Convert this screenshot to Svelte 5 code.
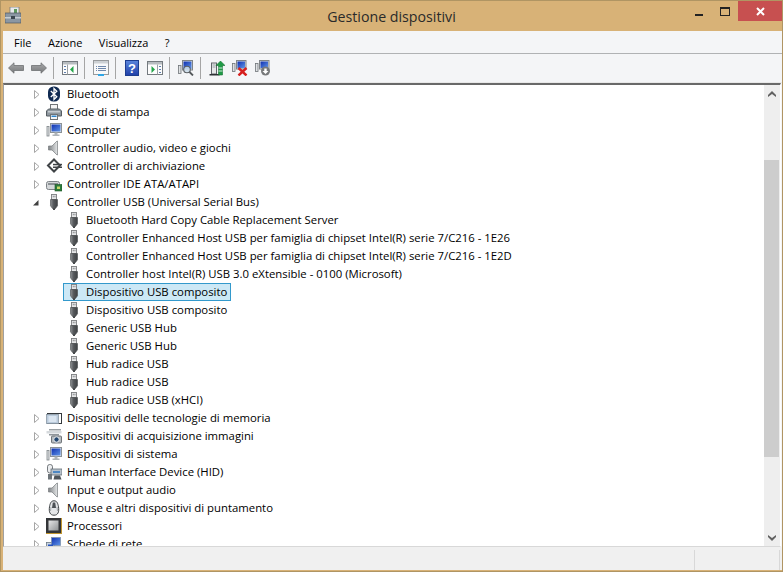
<script>
  const top1 = [
    ['bt','Bluetooth'],['printer','Code di stampa'],['computer','Computer'],['speaker','Controller audio, video e giochi'],
    ['storage','Controller di archiviazione'],['ide','Controller IDE ATA/ATAPI']
  ];
  const usb = ['Bluetooth Hard Copy Cable Replacement Server','Controller Enhanced Host USB per famiglia di chipset Intel(R) serie 7/C216 - 1E26','Controller Enhanced Host USB per famiglia di chipset Intel(R) serie 7/C216 - 1E2D','Controller host Intel(R) USB 3.0 eXtensible - 0100 (Microsoft)','Dispositivo USB composito','Dispositivo USB composito','Generic USB Hub','Generic USB Hub','Hub radice USB','Hub radice USB','Hub radice USB (xHCI)'];
  const top2 = [
    ['memory','Dispositivi delle tecnologie di memoria'],['camera','Dispositivi di acquisizione immagini'],['computer','Dispositivi di sistema'],['hid','Human Interface Device (HID)'],
    ['speaker','Input e output audio'],['mouse','Mouse e altri dispositivi di puntamento'],['cpu','Processori'],['net','Schede di rete']
  ];
  const tools = [['back','fwd'],['tree'],['props'],['help','pane'],['scan'],['update','remove','install']];
</script>

<svg class="defs" width="0" height="0" aria-hidden="true">
  <defs>
    <linearGradient id="arrowg" x1="0" y1="0" x2="0" y2="1"><stop offset="0" stop-color="#a8a9aa"/><stop offset="1" stop-color="#77797b"/></linearGradient>
    <linearGradient id="helpg" x1="0" y1="0" x2="0" y2="1"><stop offset="0" stop-color="#5b86dc"/><stop offset="1" stop-color="#1f3fa8"/></linearGradient>
    <linearGradient id="screeng" x1="0" y1="0" x2="1" y2="1"><stop offset="0" stop-color="#0f2fb0"/><stop offset="1" stop-color="#5f95e8"/></linearGradient>
    <linearGradient id="speakerg" x1="0" y1="0" x2="1" y2="0"><stop offset="0" stop-color="#7f8386"/><stop offset="1" stop-color="#e4e6e7"/></linearGradient>
    <linearGradient id="usbg" x1="0" y1="0" x2="1" y2="0"><stop offset="0" stop-color="#8e9194"/><stop offset=".45" stop-color="#55585b"/><stop offset="1" stop-color="#3f4244"/></linearGradient>
    <linearGradient id="cpug" x1="0" y1="0" x2="1" y2="1"><stop offset="0" stop-color="#e6e7e8"/><stop offset="1" stop-color="#8f9294"/></linearGradient>
  </defs>
</svg>

{#snippet icon(k)}
  <svg class="ic" viewBox="0 0 16 16" width="16" height="16">
    {#if k==='bt'}
      <rect x="2" y="0.500" width="12" height="15" rx="5.500" fill="#102a52"/>
      <path d="M4.800 5l6 5.700-2.800 2.800V2.500l2.800 2.800-6 5.700" fill="none" stroke="#fff" stroke-width="1.300"/>
    {:else if k==='printer'}
      <rect x="4.500" y="0.500" width="7" height="5" fill="#f4f4f4" stroke="#6f7376"/>
      <path d="M0.500 12V7l2-2h11l2 2v5z" fill="#8f989f" stroke="#555c62"/>
      <rect x="2" y="7" width="12" height="1.500" fill="#c6ccd1"/>
      <rect x="4.500" y="10.500" width="7" height="5" fill="#f4f6f8" stroke="#6f7376"/>
      <rect x="5.500" y="11.500" width="5" height="1.500" fill="#2c83c9"/>
    {:else if k==='computer'}
      <rect x="1" y="4.500" width="2" height="9.500" fill="#e0e3e5" stroke="#7f8589" stroke-width=".8"/>
      <rect x="4.500" y="1.500" width="11" height="9" fill="#e3e7ea" stroke="#8b9297"/>
      <rect x="5.500" y="2.500" width="9" height="7" fill="url(#screeng)"/>
      <path d="M8.500 10.500h3v2h2V14h-7v-1.500h2z" fill="#aeb4b9"/>
    {:else if k==='speaker'}
      <path d="M2.500 6H6l5-5h.5v14H11L6 10H2.500z" fill="url(#speakerg)" stroke="#777b7e" stroke-width=".7"/>
    {:else if k==='storage'}
      <path d="M8 1.500l6 6-6 6-6-6z" fill="#fff" stroke="#3f4346" stroke-width="2"/>
      <rect x="7" y="5.800" width="9" height="1.500" fill="#3f4346"/><rect x="7" y="8.500" width="9" height="1.500" fill="#3f4346"/>
    {:else if k==='ide'}
      <rect x="0.500" y="5.500" width="13" height="8" rx="2" fill="#d4d7d9" stroke="#7d8286"/>
      <rect x="2" y="7" width="10" height="2" fill="#8b9094"/>
      <rect x="9" y="8.500" width="7" height="6.500" fill="#2b7a3a" stroke="#1d5527" stroke-width=".6"/>
      <rect x="11" y="10.500" width="3" height="2.500" fill="#c6d86a"/>
    {:else if k==='memory'}
      <rect x="1.500" y="3.500" width="14" height="10" fill="#fff" stroke="#33383c"/>
      <rect x="0.500" y="4.500" width="12" height="9" fill="#bacbdc" stroke="#8b98a5" stroke-width=".8"/>
      <rect x="2.500" y="6" width="8" height="6" fill="#dbe6f1"/>
    {:else if k==='camera'}
      <rect x="3" y="1" width="12" height="1.500" fill="#9ba1a5"/>
      <path d="M0.500 3h15v2.500H.500z" fill="#d5d9dc"/><path d="M3 6h10v1.500H3z" fill="#8f959a"/>
      <rect x="5.500" y="8" width="10" height="7" rx="1" fill="#b7bcc0" stroke="#565c60" stroke-width=".8"/>
      <circle cx="10.500" cy="11.500" r="2.700" fill="#24476f" stroke="#eef0f2"/>
    {:else if k==='hid'}
      <rect x="1.500" y="0.500" width="5" height="8.500" rx="2.200" fill="#eceef0" stroke="#555b60" stroke-width=".8"/>
      <rect x="5" y="5" width="11" height="6" fill="#b8c2cc" stroke="#667078" stroke-width=".8"/>
      <rect x="7" y="7" width="7" height="2" fill="#4d87c2"/>
      <path d="M2 10h4v5.500H2z" fill="#6d7479"/><path d="M8.500 11.500h5.500l1.500 4h-8z" fill="#4f555a"/>
    {:else if k==='mouse'}
      <path d="M8 .8c3 0 3.800 2.400 4.500 6 .8 5.200-.5 8.400-4.500 8.400s-5.300-3.200-4.500-8.400C4.200 3.200 5 .8 8 .8z" fill="#e4e6e8" stroke="#3d4144"/>
      <path d="M6.800 2.500h2.400l.8 5.500H6z" fill="#4c5155"/>
      <path d="M5 7l-.5 4M11 7l.5 4" stroke="#a5a9ac"/>
    {:else if k==='cpu'}
      <rect x="0" y="0" width="16" height="16" fill="#c0952f"/>
      <rect x="0" y="0" width="15" height="15" fill="#333538"/>
      <rect x="2.500" y="2.500" width="10" height="10" fill="url(#cpug)"/>
    {:else if k==='net'}
      <rect x="0.500" y="6.500" width="8" height="8" fill="#c9d5e2" stroke="#6d7a87" stroke-width=".8"/>
      <rect x="5.500" y="1.500" width="9" height="8" fill="url(#screeng)" stroke="#7f93ad" stroke-width=".8"/>
      <rect x="2" y="8.500" width="5" height="4" fill="#2352bf"/>
    {:else}
      <rect x="5.500" y="0.500" width="5" height="5" fill="#e6e7e8" stroke="#7c7e80" stroke-width=".9"/>
      <path d="M6.800 1.800h.9v1.500h-.9zM8.500 1.800h.9v1.500h-.9z" fill="#7c7e80"/>
      <path d="M4.500 5.500h7v6.300l-2 2.700h-3l-2-2.700z" fill="url(#usbg)" stroke="#46494b" stroke-width=".6"/>
      <path d="M7 14h2v2H7z" fill="#46494b"/>
    {/if}
  </svg>
{/snippet}

{#snippet arrow(open)}
  <svg class="tw" width="9" height="9" viewBox="0 0 9 9">
    {#if open}<path d="M1 7.500L6.500 2v5.500z" fill="#404040"/>{:else}<path d="M2.500 0.500L7 4.500 2.500 8.500z" fill="#fff" stroke="#a6a6a6"/>{/if}
  </svg>
{/snippet}

{#snippet toolicon(k)}
  <svg class="ti" width="16" height="16" viewBox="0 0 16 16">
    {#if k==='back'}<path d="M.5 8L6 2.800V5.500h9.500v5H6v2.700z" fill="url(#arrowg)" stroke="#6f7173" stroke-width=".8"/>
    {:else if k==='fwd'}<path d="M15.500 8L10 2.800V5.500H.5v5H10v2.700z" fill="url(#arrowg)" stroke="#6f7173" stroke-width=".8"/>
    {:else if k==='tree'}<rect x=".5" y="1.500" width="15" height="13" fill="#fdfdfd" stroke="#747a7f"/><rect x="1" y="2" width="14" height="2.500" fill="#b7bcc0"/><rect x="5" y="4.500" width="1" height="10" fill="#9aa0a4"/><path d="M11.500 6v7L8 9.500z" fill="#24a64a"/><path d="M2 6h2v1H2zM2 9h2v1H2zM2 12h2v1H2z" fill="#5f7fae"/>
    {:else if k==='props'}<rect x=".5" y=".5" width="15" height="14" fill="#f8f9fa" stroke="#979a9c"/><rect x="1" y="1" width="14" height="2.500" fill="#cdd1d4"/><path d="M3 6h1v1H3zM5 6h8v1H5zM3 8h1v1H3zM5 8h8v1H5zM3 10h1v1H3zM5 10h8v1H5z" fill="#6f88ab"/><rect x="5" y="14" width="6" height="2" fill="#2fa6e6"/>
    {:else if k==='help'}<rect x="1.500" y=".5" width="13" height="15" fill="url(#helpg)" stroke="#1c3d8f"/><text x="8" y="13" text-anchor="middle" font-family="Liberation Sans" font-weight="700" font-size="13" fill="#fff">?</text>
    {:else if k==='pane'}<rect x=".5" y="1.500" width="15" height="13" fill="#fdfdfd" stroke="#747a7f"/><rect x="1" y="2" width="14" height="2.500" fill="#b7bcc0"/><rect x="10" y="4.500" width="1" height="10" fill="#9aa0a4"/><path d="M4.500 6v7L8 9.500z" fill="#24a64a"/><path d="M12 6h2v1h-2zM12 9h2v1h-2zM12 12h2v1h-2z" fill="#5f7fae"/>
    {:else if k==='scan'}<rect x=".5" y="5.500" width="2.500" height="8" fill="#dfe2e4" stroke="#6f7478" stroke-width=".8"/><rect x="4.500" y=".5" width="10" height="9.500" fill="#d8dee3" stroke="#7f8488"/><rect x="5.500" y="1.500" width="8" height="7.500" fill="url(#screeng)"/><circle cx="9" cy="9.500" r="3.300" fill="#cfe0ee" fill-opacity=".85" stroke="#5b6064" stroke-width="1.100"/><path d="M11.500 12l3.500 3.500" stroke="#55595c" stroke-width="1.800"/>
    {:else if k==='update'}<rect x="2.500" y="3" width="5" height="11" fill="#e6e8e9" stroke="#60656a"/><path d="M3.500 5h3M3.500 7h3" stroke="#9aa0a4"/><path d="M0.500 14h10v1.500H.5z" fill="#2e3235"/><path d="M11.500 1l4.500 4.500h-2.500V15h-4V5.500H7z" fill="#1f9a46" stroke="#14702f" stroke-width=".6"/><path d="M9.500 8h4M9.500 11h4" stroke="#fff" stroke-width=".8"/>
    {:else if k==='remove'}<rect x=".5" y="3.500" width="2.500" height="8" fill="#dfe2e4" stroke="#6f7478" stroke-width=".8"/><rect x="4.500" y=".5" width="9.500" height="8.500" fill="#d8dee3" stroke="#7f8488"/><rect x="5.500" y="1.500" width="7.500" height="6.500" fill="url(#screeng)"/><path d="M6.500 8l8 7.500M14.500 8l-8 7.500" stroke="#d6201f" stroke-width="2.400"/>
    {:else if k==='install'}<rect x=".5" y="3.500" width="2.500" height="8" fill="#dfe2e4" stroke="#6f7478" stroke-width=".8"/><rect x="4.500" y=".5" width="9.500" height="8.500" fill="#d8dee3" stroke="#7f8488"/><rect x="5.500" y="1.500" width="7.500" height="6.500" fill="url(#screeng)"/><circle cx="10.500" cy="11" r="4.500" fill="#77797b"/><path d="M9.300 8.500h2.400v2.400h1.800L10.500 14l-3-3.100h1.800z" fill="#fff"/>
    {/if}
  </svg>
{/snippet}

<div class="window">
  <header class="titlebar">
    <svg class="appicon" width="16" height="17" viewBox="0 0 16 17">
      <rect x="5" y="0" width="9" height="7" fill="#e8eaec" stroke="#6d7377" stroke-width=".7"/><rect x="9" y="2" width="3" height="4" fill="#5e9a5e"/>
      <rect x="0" y="6" width="16" height="10" fill="#8b97a3" stroke="#4e5860" stroke-width=".7"/><rect x="0" y="10" width="16" height="1.500" fill="#c6ced4"/><rect x="6" y="9" width="4" height="3" fill="#3d4750"/>
    </svg>
    <div class="title">Gestione dispositivi</div>
    <div class="controls">
      <div class="ctl c1"><span class="min"></span></div>
      <div class="ctl c2"><span class="max"></span></div>
      <div class="close"><svg width="9" height="9" viewBox="0 0 9 9"><path d="M1 1l7 7M8 1l-7 7" stroke="#fff" stroke-width="2"/></svg></div>
    </div>
  </header>
  <div class="client">
    <nav class="menu"><span>File</span><span>Azione</span><span>Visualizza</span><span>?</span></nav>
    <div class="toolbar">
      {#each tools as group, gi}
        {#if gi > 0}<i></i>{/if}
        {#each group as t}<div class="tbtn">{@render toolicon(t)}</div>{/each}
      {/each}
    </div>
    <div class="content">
      <div class="tree">
        {#each top1 as [k,t]}
          <div class="row">{@render arrow(false)}{@render icon(k)}<span class="lbl">{t}</span></div>
        {/each}
        <div class="row">{@render arrow(true)}{@render icon('usb')}<span class="lbl">Controller USB (Universal Serial Bus)</span></div>
        {#each usb as t,i}
          <div class="row child">
            <div class="cell" class:sel={i===4}>{@render icon('usb')}<span class="lbl">{t}</span></div>
          </div>
        {/each}
        {#each top2 as [k,t]}
          <div class="row">{@render arrow(false)}{@render icon(k)}<span class="lbl">{t}</span></div>
        {/each}
      </div>
      <div class="scrollbar">
        <div class="sbtn"><svg width="8" height="6" viewBox="0 0 8 6"><path d="M0 4l4-4 4 4v2L4 3 0 6z" fill="#606060"/></svg></div>
        <div class="strack"><div class="thumb"></div></div>
        <div class="sbtn"><svg width="8" height="6" viewBox="0 0 8 6"><path d="M0 0l4 3 4-3v2L4 6 0 2z" fill="#606060"/></svg></div>
      </div>
    </div>
    <footer class="status"><div></div><div class="s2"></div><div class="s3"></div></footer>
  </div>
</div>

<style>
  :global(body){margin:0;background:#d8b277;}
  .defs{position:absolute;}
  .window{width:783px;height:572px;box-sizing:border-box;display:flex;flex-direction:column;background:#d8b277;border:1px solid #b09563;overflow:hidden;font-family:"Open Sans","Noto Sans",sans-serif;color:#000;}
  .titlebar{height:30px;flex:none;position:relative;display:flex;align-items:flex-start;}
  .appicon{margin:6px 0 0 4px;}
  .title{position:absolute;left:0;right:0;top:6px;text-align:center;font-size:14.2px;line-height:20px;color:#2a2a2a;}
  .controls{position:absolute;right:0;top:0;display:flex;}
  .ctl{height:20px;display:flex;align-items:center;justify-content:center;}
  .c1{width:27px;}
  .c2{width:26px;}
  .min{width:8px;height:2px;background:#222;margin-top:7px;}
  .max{width:8px;height:6px;border:1px solid #222;border-top-width:2px;margin-top:1px;}
  .close{width:44px;height:20px;background:#c75050;display:flex;align-items:center;justify-content:center;}
  .client{flex:1;margin:0 0 1px 2px;background:#f4f5f7;display:flex;flex-direction:column;min-height:0;}
  .menu{height:22px;flex:none;display:flex;gap:16.5px;padding-left:11px;align-items:center;font-size:11px;border-bottom:1px solid #b0b2b4;}
  .toolbar{height:28px;flex:none;display:flex;align-items:center;padding-left:2px;border-bottom:1px solid #e8e8e8;}
  .toolbar i{width:1px;height:22px;background:#a5a5a5;margin:0 5px 0 2px;}
  .tbtn{width:23px;height:28px;box-sizing:border-box;padding-left:3px;display:flex;align-items:center;}
  .ti{display:block;}
  .content{flex:1;min-height:0;display:flex;background:#fff;border-top:2px solid #696969;border-left:1px solid #a0a0a0;border-right:1px solid #fff;margin-right:1px;overflow:hidden;border-bottom:1px solid #d8d8d8;}
  .tree{flex:1;min-width:0;overflow:hidden;}
  .row{height:18px;display:flex;align-items:center;padding-left:28px;font-size:11.35px;line-height:18px;white-space:nowrap;}
  .tw{margin-right:5px;flex:none;}
  .ic{flex:none;margin-right:5px;}
  .child{padding-left:59px;}
  .cell{display:flex;align-items:center;height:18px;box-sizing:border-box;padding:0 3px 0 2px;border:1px solid transparent;}
  .cell .ic{margin-right:4px;}
  .sel{background:#cce8f6;border-color:#3399cc;}
  .scrollbar{width:16px;flex:none;background:#eeeeee;display:flex;flex-direction:column;}
  .sbtn{height:17px;flex:none;display:flex;align-items:center;justify-content:center;}
  .strack{flex:1;padding-top:58px;}
  .thumb{height:297px;width:15px;background:#cdcdcd;}
  .status{height:23px;flex:none;display:flex;background:#f0f0f0;}
  .status div:first-child{flex:1;}
  .s2{width:85px;box-sizing:border-box;border-left:1px solid #d8d8d8;margin:3px 0 0;}
  .s3{width:3px;box-sizing:border-box;border-left:1px solid #d8d8d8;margin:3px 0 0;}
</style>
